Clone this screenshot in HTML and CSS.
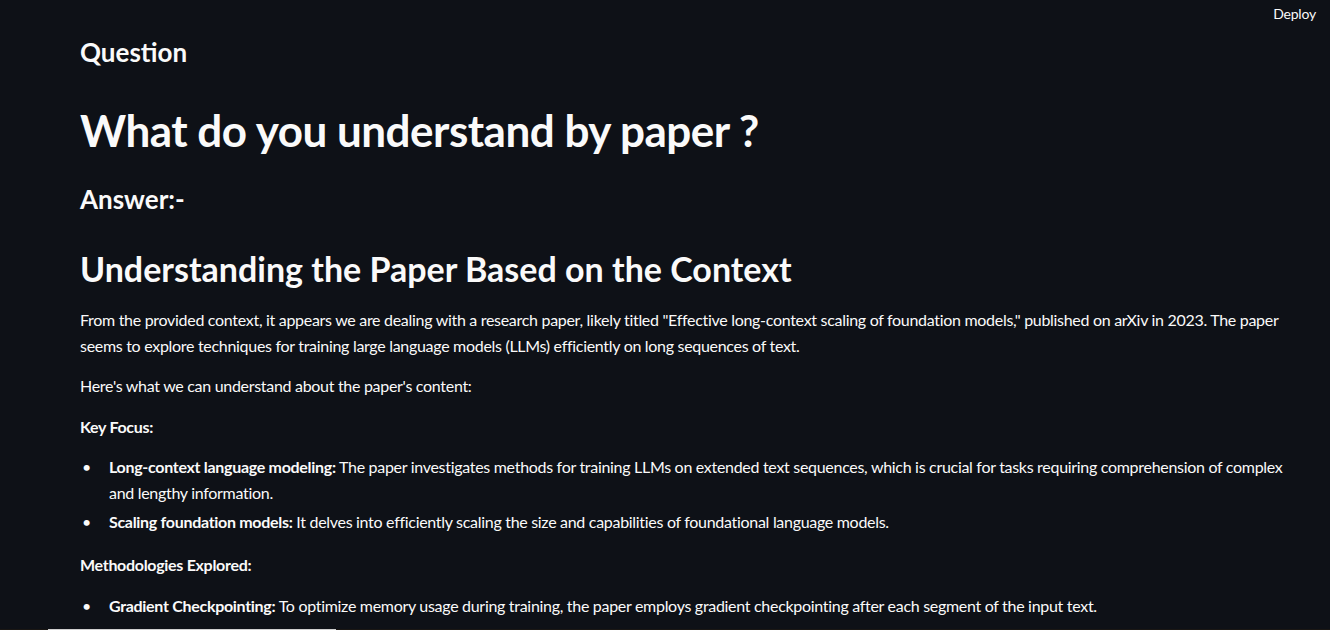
FILE: index.html
```html
<!DOCTYPE html>
<html lang="en">
<head>
<meta charset="utf-8">
<title>Streamlit</title>
<link rel="stylesheet" href="styles.css">
</head>
<body>
<header class="topbar">
  <button class="deploy">Deploy</button>
</header>
<main class="main">
  <h3 class="subheader">Question</h3>
  <h1 class="title">What do you understand by paper ?</h1>
  <h3 class="subheader answer">Answer:-</h3>
  <div class="markdown">
    <h2 class="md-h2">Understanding the Paper Based on the Context</h2>
    <p>From the provided context, it appears we are dealing with a research paper, likely titled "Effective long-context scaling of foundation models," published on arXiv in 2023. The paper seems to explore techniques for training large language models (LLMs) efficiently on long sequences of text.</p>
    <p>Here's what we can understand about the paper's content:</p>
    <p><strong>Key Focus:</strong></p>
    <ul>
      <li><span><strong>Long-context language modeling:</strong> The paper investigates methods for training LLMs on extended text sequences, which is crucial for tasks requiring comprehension of complex and lengthy information.</span></li>
      <li><span><strong>Scaling foundation models:</strong> It delves into efficiently scaling the size and capabilities of foundational language models.</span></li>
    </ul>
    <p><strong>Methodologies Explored:</strong></p>
    <ul>
      <li><span><strong>Gradient Checkpointing:</strong> To optimize memory usage during training, the paper employs gradient checkpointing after each segment of the input text.</span></li>
    </ul>
  </div>
</main>
<div class="scrollbar"><div class="scroll-thumb"></div></div>
</body>
</html>
```
FILE: styles.css
```css
html, body {
  margin: 0;
  padding: 0;
  height: 100%;
  overflow: hidden;
}
body {
  background: #0e1117;
  color: #fafafa;
  font-family: Lato, "Noto Sans", sans-serif;
  font-size: 16px;
  line-height: 1.6;
  letter-spacing: -0.3px;
  position: relative;
}
.topbar {
  display: flex;
  justify-content: flex-end;
  height: 28px;
  padding: 0 14px 0 0;
}
.deploy {
  background: transparent;
  border: none;
  color: #fafafa;
  font-family: inherit;
  font-size: 14px;
  letter-spacing: -0.2px;
  padding: 4px 0 0 0;
  height: 24px;
  line-height: 1.2;
}
.main {
  padding: 0 40px 0 80px;
  margin-top: -28px;
}
h1, h2, h3 { margin: 0; }
.subheader {
  font-size: 26px;
  font-weight: 700;
  line-height: 1.2;
  letter-spacing: 0;
  padding: 37px 0 0 0;
}
.title {
  font-size: 44px;
  font-weight: 700;
  line-height: 1.2;
  letter-spacing: -0.5px;
  padding: 36px 0 0 0;
}
.answer { padding-top: 27px; }
.md-h2 {
  font-size: 34px;
  font-weight: 700;
  line-height: 1.2;
  letter-spacing: 0;
  padding: 34px 0 0 0;
  margin-bottom: 17px;
}
.markdown p { margin: 0 0 15px 0; }
.markdown strong { font-weight: 700; }
.markdown ul {
  margin: 1px 0 18px 0;
  padding-left: 0;
  list-style: none;
}
.markdown li {
  display: grid;
  grid-template-columns: 29px 1fr;
  margin: 0 0 3px 0;
}
.markdown li::before {
  content: "\2022";
  padding-left: 2px;
}
.scrollbar {
  position: absolute;
  left: 0;
  right: 0;
  bottom: 0;
  height: 1px;
  background: #1a1714;
}
.scroll-thumb {
  margin-left: 48px;
  width: 288px;
  height: 1px;
  background: #d0d0d0;
}
```
